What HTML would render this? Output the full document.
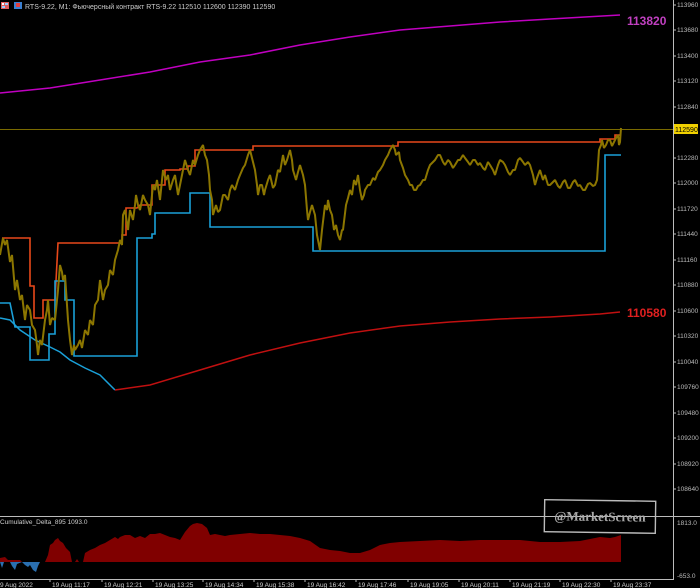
<!DOCTYPE html>
<html><head><meta charset="utf-8"><style>
html,body{margin:0;padding:0;background:#000;}
svg{display:block}
text{font-family:"Liberation Sans",sans-serif;}
</style></head><body>
<svg width="700" height="588" viewBox="0 0 700 588" xmlns="http://www.w3.org/2000/svg">
<rect width="700" height="588" fill="#000"/>
<!-- header -->
<rect x="1" y="2" width="8" height="7" fill="#e06060"/><rect x="2" y="3" width="2" height="2" fill="#fff"/><rect x="5" y="3" width="3" height="2" fill="#9cf"/><rect x="2" y="6" width="3" height="2" fill="#9cf"/>
<rect x="14" y="2" width="8" height="7" fill="#3a7fd0"/><rect x="16" y="3" width="4" height="4" fill="#e04040"/>
<text x="25" y="9" font-size="7" fill="#ccc">RTS-9.22, M1:  Фьючерсный контракт RTS-9.22  112510 112600 112390 112590</text>
<!-- axis -->
<line x1="673.5" y1="0" x2="673.5" y2="579" stroke="#bbb" stroke-width="1"/>
<g font-size="6.5" fill="#bbb">
<text x="677" y="7">113960</text><text x="677" y="32">113680</text><text x="677" y="58">113400</text><text x="677" y="83">113120</text><text x="677" y="109">112840</text>
<text x="677" y="160">112280</text><text x="677" y="185">112000</text><text x="677" y="211">111720</text><text x="677" y="236">111440</text><text x="677" y="262">111160</text>
<text x="677" y="287">110880</text><text x="677" y="313">110600</text><text x="677" y="338">110320</text><text x="677" y="364">110040</text><text x="677" y="389">109760</text>
<text x="677" y="415">109480</text><text x="677" y="440">109200</text><text x="677" y="466">108920</text><text x="677" y="491">108640</text>
<text x="677" y="525">1813.0</text><text x="677" y="578">-653.0</text>
</g>
<g stroke="#bbb"><line x1="673" y1="5" x2="676" y2="5"/><line x1="673" y1="30" x2="676" y2="30"/><line x1="673" y1="56" x2="676" y2="56"/><line x1="673" y1="81" x2="676" y2="81"/><line x1="673" y1="107" x2="676" y2="107"/><line x1="673" y1="158" x2="676" y2="158"/><line x1="673" y1="183" x2="676" y2="183"/><line x1="673" y1="209" x2="676" y2="209"/><line x1="673" y1="234" x2="676" y2="234"/><line x1="673" y1="260" x2="676" y2="260"/><line x1="673" y1="285" x2="676" y2="285"/><line x1="673" y1="311" x2="676" y2="311"/><line x1="673" y1="336" x2="676" y2="336"/><line x1="673" y1="362" x2="676" y2="362"/><line x1="673" y1="387" x2="676" y2="387"/><line x1="673" y1="413" x2="676" y2="413"/><line x1="673" y1="438" x2="676" y2="438"/><line x1="673" y1="464" x2="676" y2="464"/><line x1="673" y1="489" x2="676" y2="489"/></g>
<!-- price line -->
<line x1="0" y1="129.5" x2="673" y2="129.5" stroke="#7a6a00" stroke-width="1"/>
<rect x="674" y="124" width="24" height="10" fill="#f0d000"/>
<text x="675" y="132" font-size="7" fill="#000">112590</text>
<!-- bands -->
<polyline fill="none" stroke="#c000c0" stroke-width="1.5" points="0,93 50,88 100,80 150,72 200,62 250,55 300,45 350,37 400,30 450,26 500,22 550,19 620,15"/>
<text x="627" y="25" font-size="12" font-weight="bold" fill="#c040c0">113820</text>
<polyline fill="none" stroke="#1aa0d8" stroke-width="1.5" points="0,318 10,320 20,330 35,340 50,347 60,352 70,360 85,368 100,375 115,390"/>
<polyline fill="none" stroke="#c01010" stroke-width="1.5" points="115,390 150,385 200,370 250,355 300,343 350,333 400,326 450,322 500,319 550,317 600,314 620,312"/>
<text x="627" y="317" font-size="12" font-weight="bold" fill="#e02020">110580</text>
<!-- resistance -->
<polyline fill="none" stroke="#e8481a" stroke-width="1.6" points="2,238 30,238 30,286 34,286 34,318 43,318 43,300 55,300 58,243 122,243 122,235 126,235 126,208 137,208 140,205 152,205 152,185 165,185 165,170 180,170 180,169 188,169 188,166 195,166 195,150 253,150 253,146 398,146 398,142 600,142 600,139 615,139 615,135 621,135"/>
<!-- support -->
<polyline fill="none" stroke="#1aa0d8" stroke-width="1.6" points="0,303 10,303 15,327 30,327 30,360 49,360 49,334 55,334 55,281 65,281 65,300 74,300 74,356 137,356 137,238 152,238 152,234 155,234 155,213 190,213 190,193 210,193 210,227 313,227 313,251 605,251 605,155 621,155"/>
<!-- price -->
<polyline fill="none" stroke="#8c7600" stroke-width="2" stroke-linejoin="bevel" points="0,255 3,238 5,245 7,240 10,262 12,255 15,290 17,280 20,300 22,295 25,320 27,305 30,310 32,325 35,330 37,345 38,355 40,340 42,345 45,320 47,310 48,300 50,325 52,318 55,320 58,290 60,265 62,272 63,280 65,275 66,290 68,320 70,340 72,355 74,345 75,350 78,345 80,340 82,348 85,330 88,335 90,320 93,325 95,305 98,300 100,280 103,300 105,290 108,285 110,270 113,275 115,260 118,250 120,240 122,245 123,215 125,210 128,230 130,210 133,220 135,205 136,195 138,205 140,210 143,195 145,200 148,205 150,215 153,185 155,190 157,180 160,200 163,170 166,180 168,175 170,190 173,180 175,175 178,195 180,185 183,170 185,160 188,170 190,175 193,160 195,165 198,155 200,150 203,145 205,155 207,160 209,175 210,190 212,200 213,215 216,205 218,212 220,210 223,195 225,195 228,200 230,190 232,185 235,190 238,180 240,175 243,168 245,165 248,155 250,150 253,162 255,170 257,185 258,195 260,185 262,185 264,195 265,190 268,180 270,175 273,188 275,185 278,170 280,172 283,155 285,165 287,160 290,150 292,160 293,170 296,180 298,172 300,165 303,175 305,185 307,210 308,220 310,212 312,205 315,215 317,235 318,240 320,250 322,230 325,205 327,210 328,200 330,210 332,215 334,230 336,225 338,235 340,240 342,230 343,230 346,205 348,198 350,190 352,195 354,180 356,185 358,175 360,190 362,200 364,195 365,190 368,185 370,185 373,178 375,180 378,172 380,170 383,165 385,160 388,155 390,150 393,145 395,150 396,155 399,152 400,160 403,168 405,175 408,180 410,185 412,185 414,190 416,190 418,186 420,185 423,180 425,180 428,170 430,165 433,162 435,160 438,155 440,155 443,162 445,165 448,160 450,162 453,168 455,165 458,160 460,160 463,155 465,158 468,162 470,165 473,160 475,160 478,165 480,163 483,168 485,170 488,162 490,165 493,170 495,175 498,165 500,160 503,162 505,165 508,172 510,175 513,170 515,170 518,160 520,158 523,162 525,165 528,162 530,165 533,175 535,185 537,178 540,170 543,180 545,175 548,185 550,185 553,182 555,180 558,186 560,188 563,182 565,180 568,188 570,188 573,182 575,180 578,186 580,185 583,190 585,190 588,184 590,183 593,186 595,185 597,180 599,150 601,145 602,140 604,148 606,145 608,140 610,140 612,146 614,142 616,138 618,135 619,145 620,142 621,128"/>
<!-- subwindow -->
<line x1="0" y1="516.5" x2="700" y2="516.5" stroke="#bbb" stroke-width="1"/>
<text x="0" y="524" font-size="6.5" fill="#ccc">Cumulative_Delta_895 1093.0</text>
<polygon fill="#800000" points="0,562 0,558 5,557 8,560 20,560 22,562 45,562 48,555 50,545 53,543 55,540 58,538 60,541 63,543 66,548 70,552 72,562 75,562 77,559 79,562 83,562 85,553 90,550 95,548 100,545 105,543 110,540 115,537 118,539 120,537 125,535 130,535 135,538 140,536 145,538 150,534 155,534 160,533 165,535 170,537 175,538 180,540 185,532 190,526 193,524 197,523 202,524 207,528 210,535 215,534 220,535 225,536 230,535 240,534 250,533 260,534 270,534 280,535 290,536 300,538 310,541 320,548 330,550 340,551 350,553 360,553 370,550 380,545 390,543 400,542 420,541 440,540 460,541 480,540 500,540 520,540 540,542 560,542 580,541 600,537 610,538 615,537 621,535 621,562"/>
<polygon fill="#2a6fb0" points="0,562 2,568 4,562 10,562 12,566 15,570 17,564 22,562 25,565 28,567 30,565 33,570 36,572 38,566 40,562"/>
<!-- watermark -->
<g transform="rotate(0.8 600 516)">
<rect x="544.5" y="500.5" width="111" height="32" fill="none" stroke="#bbb" stroke-width="1.4"/>
<text x="600" y="521" font-size="13" font-weight="bold" fill="#aaa" text-anchor="middle" style="font-family:'Liberation Serif',serif">@MarketScreen</text>
</g>
<!-- time axis -->
<line x1="0" y1="579.5" x2="674" y2="579.5" stroke="#bbb" stroke-width="1"/>
<g font-size="6.5" fill="#ccc">
<text x="0" y="587">9 Aug 2022</text><text x="52" y="587">19 Aug 11:17</text><text x="104" y="587">19 Aug 12:21</text><text x="155" y="587">19 Aug 13:25</text><text x="205" y="587">19 Aug 14:34</text><text x="256" y="587">19 Aug 15:38</text><text x="307" y="587">19 Aug 16:42</text><text x="358" y="587">19 Aug 17:46</text><text x="410" y="587">19 Aug 19:05</text><text x="461" y="587">19 Aug 20:11</text><text x="512" y="587">19 Aug 21:19</text><text x="562" y="587">19 Aug 22:30</text><text x="613" y="587">19 Aug 23:37</text>
</g>
<g stroke="#bbb"><line x1="50" y1="579" x2="50" y2="582"/><line x1="102" y1="579" x2="102" y2="582"/><line x1="153" y1="579" x2="153" y2="582"/><line x1="203" y1="579" x2="203" y2="582"/><line x1="254" y1="579" x2="254" y2="582"/><line x1="305" y1="579" x2="305" y2="582"/><line x1="356" y1="579" x2="356" y2="582"/><line x1="408" y1="579" x2="408" y2="582"/><line x1="459" y1="579" x2="459" y2="582"/><line x1="510" y1="579" x2="510" y2="582"/><line x1="560" y1="579" x2="560" y2="582"/><line x1="611" y1="579" x2="611" y2="582"/></g>
</svg>
</body></html>
